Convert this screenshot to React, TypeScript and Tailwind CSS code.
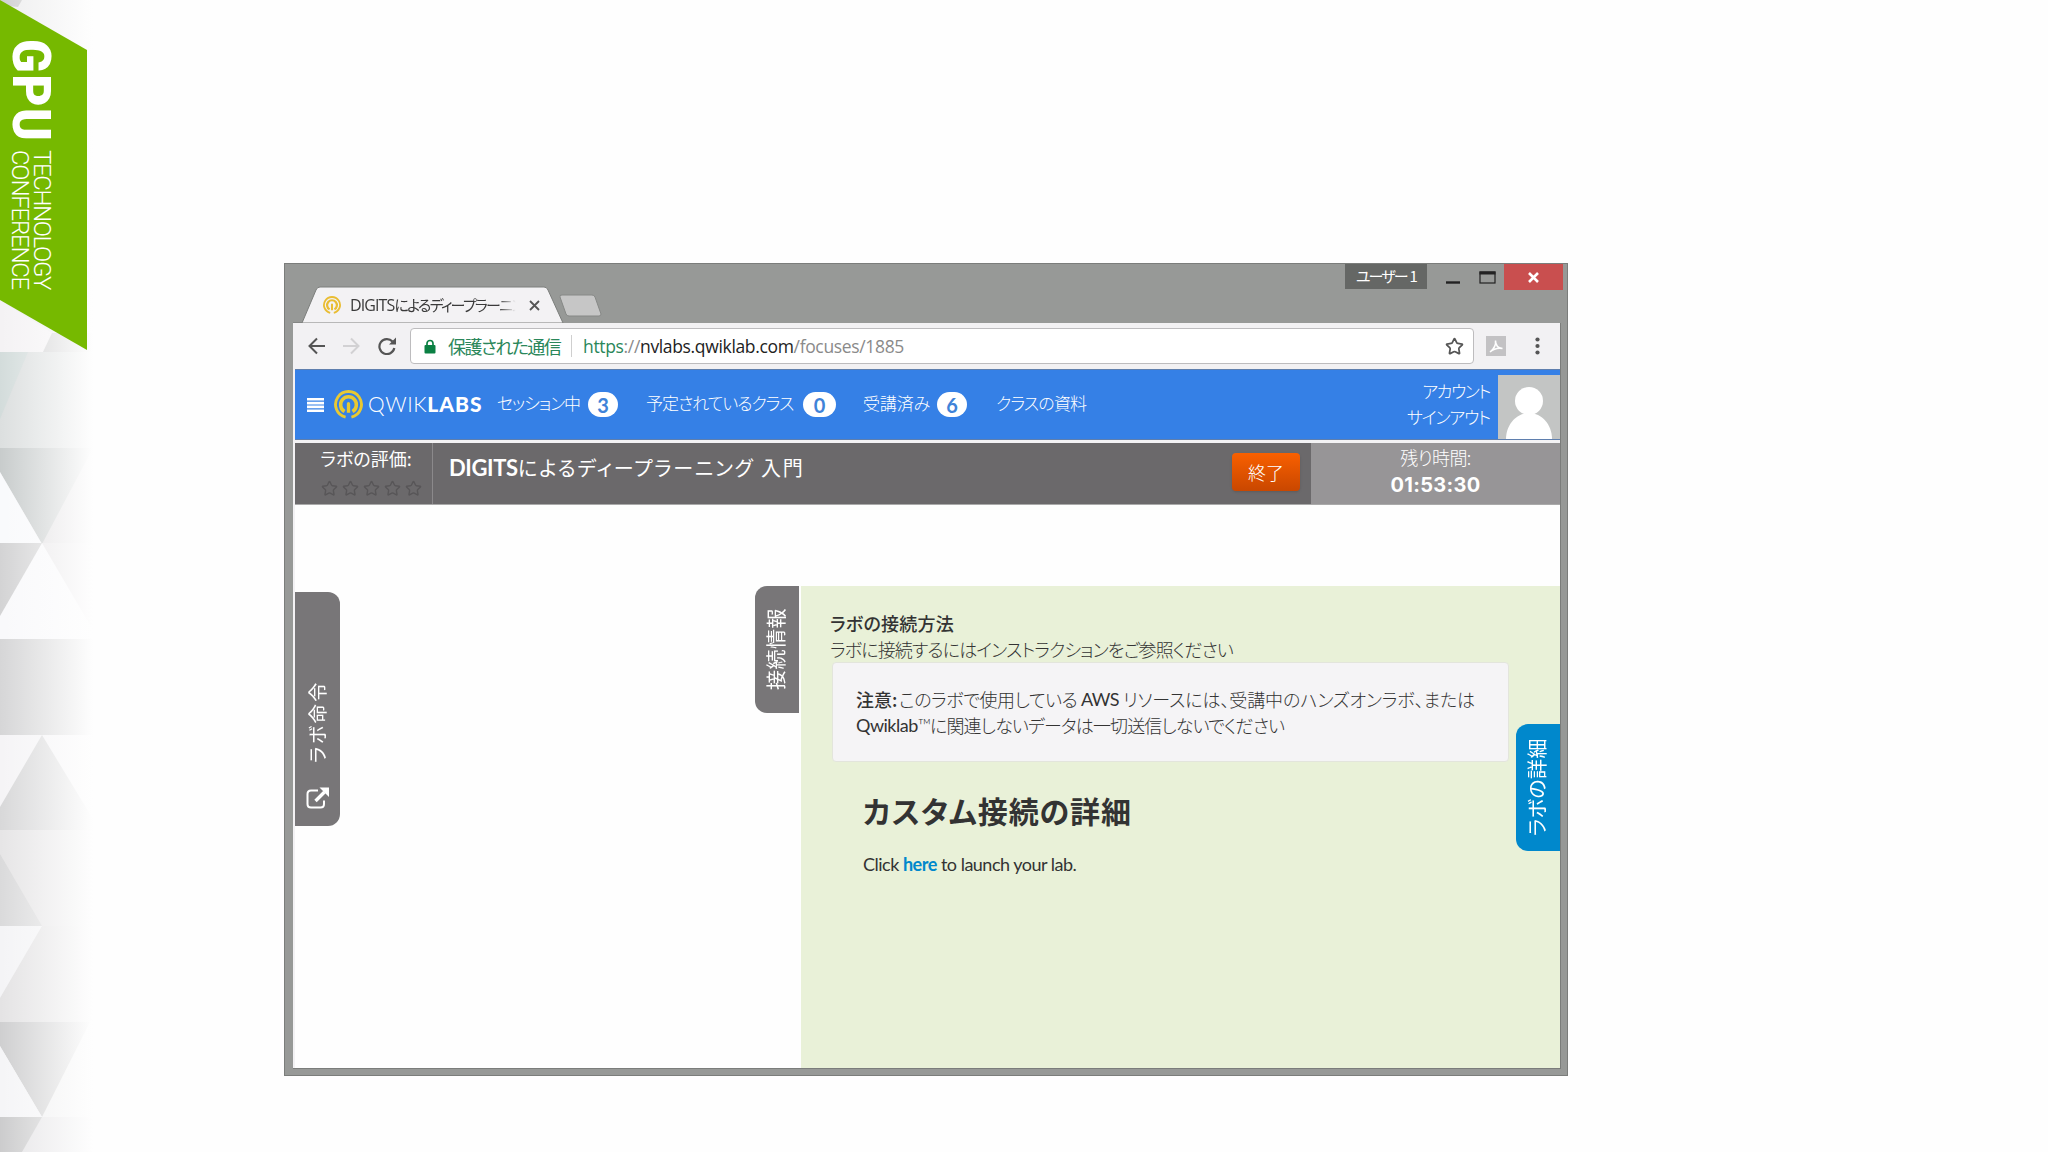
import type { ReactNode } from 'react'
import { Star } from 'lucide-react'

function QwikMark({ className, color }: { className: string; color: string }) {
  return (
    <svg className={className} viewBox="0 0 28 28" fill="none" stroke={color}>
      <path d="M11.2 26.2A12.5 12.5 0 1 1 16.8 26.2" strokeWidth="2.8" />
      <path d="M10.2 20.8A7.6 7.6 0 1 1 17.8 20.8" strokeWidth="3.4" />
      <path d="M12.4 22V13.2a1.6 1.6 0 0 1 3.2 0V22Z" fill={color} stroke="none" />
    </svg>
  )
}

function Badge({ className, children }: { className: string; children: ReactNode }) {
  return (
    <span
      className={`flex h-[25px] items-center justify-center rounded-full bg-white font-[Lato] text-[20px] leading-none font-bold text-[#3f83d8] ${className}`}
    >
      {children}
    </span>
  )
}

// Faded triangle pattern behind the conference ribbon
function Facets() {
  return (
    <svg className="absolute top-0 left-0 h-[1152px] w-[93px]" viewBox="0 0 93 1152">
      <defs>
        <linearGradient id="fade" x1="0" x2="1" y1="0" y2="0">
          <stop offset="0" stopColor="#fefefe" stopOpacity="0" />
          <stop offset="1" stopColor="#fefefe" />
        </linearGradient>
      </defs>
      <rect width="93" height="1152" fill="#eeeeef" />
      <path d="M0 0H22L18 7L8 6Z" fill="#d0d0d1" />
      <path d="M0 300L52 333L43 352H0Z" fill="#f4f2f4" />
      <path d="M52 333L43 352H93V333Z" fill="#d0d0d1" />
      <rect y="352" width="93" height="96" fill="#dcdfdf" />
      <path d="M0 352H28L0 419Z" fill="#d3dcdb" />
      <rect y="448" width="93" height="96" fill="#e2e0e2" />
      <path d="M0 448H93L42 544L0 472Z" fill="#c8cccc" />
      <path d="M0 472L42 544H0Z" fill="#f9fafc" />
      <rect y="543" width="93" height="96" fill="#f9f9fb" />
      <path d="M0 543H42L0 616Z" fill="#d3d3d4" />
      <path d="M42 543H93V630Z" fill="#e8e6e8" />
      <rect y="639" width="93" height="96" fill="#d6d6d7" />
      <rect y="735" width="93" height="95" fill="#f5f4f6" />
      <path d="M42 735L0 807V830H93V819Z" fill="#d8d8d9" />
      <rect y="830" width="93" height="96" fill="#e6e5e6" />
      <path d="M0 854L42 926H0Z" fill="#dadadb" />
      <rect y="926" width="93" height="96" fill="#e4e3e4" />
      <path d="M0 926H42L0 998Z" fill="#f4f4f6" />
      <rect y="1022" width="93" height="95" fill="#f0f0f1" />
      <path d="M0 1022H90L42 1117L0 1046Z" fill="#cfcfd0" />
      <path d="M0 1046L42 1117H0Z" fill="#f5f5f7" />
      <rect y="1117" width="93" height="35" fill="#e6e5e7" />
      <path d="M0 1117H42L22 1152H0Z" fill="#cccccd" />
      <rect width="93" height="1152" fill="url(#fade)" />
    </svg>
  )
}

function Ribbon() {
  return (
    <div className="relative flex h-[350px] w-[87px] flex-col items-start bg-[#76b900] pt-[39px] text-white [clip-path:polygon(0_0,100%_50px,100%_100%,0_300px)]">
      <div className="ml-[4px] h-[98px] w-[54px] origin-top scale-y-[0.92] font-[Roboto] text-[54px] leading-[54px] font-black tracking-[1.5px] whitespace-nowrap [writing-mode:vertical-rl]">
        GPU
      </div>
      <div className="mt-[13px] ml-[9px] w-[44px] font-[Roboto] text-[24px] leading-[22px] font-light whitespace-nowrap [writing-mode:vertical-rl]">
        <div className="tracking-[-1.38px]">TECHNOLOGY</div>
        <div className="tracking-[-1.22px]">CONFERENCE</div>
      </div>
    </div>
  )
}

function TitleBar() {
  return (
    <div className="relative flex h-[59px] justify-between">
      <svg className="h-[59px] w-[340px]" viewBox="0 1 340 59">
        <path d="M275 34Q274 32 277 32H307Q309 32 310 34L316 51Q316 53 314 53H284Q282 53 281 51Z" fill="#c6c6c6" stroke="#868886" />
        <path d="M8 60H17L31 27Q32 24 35 24H259Q262 24 263 27L278 60Z" fill="#f3f2f4" stroke="#7c7e7c" />
      </svg>
      <div className="absolute top-[30px] left-[38px] flex items-center">
        <QwikMark className="size-[18px]" color="#e9bd33" />
        <span className="ml-[9px] w-[169px] font-['Open_Sans','Noto_Sans_CJK_JP'] text-[15px] leading-[22px] tracking-[-1.75px] whitespace-nowrap text-[#3a3a3a] [mask-image:linear-gradient(to_right,black_88%,transparent_98%)]">
          <span className="text-[16px] tracking-[-0.9px]">DIGITS</span>によるディープラーニン
        </span>
        <svg className="ml-[10px] size-[11px]" viewBox="0 0 11 11" stroke="#555" strokeWidth="1.8">
          <path d="M1 1L10 10M10 1L1 10" />
        </svg>
      </div>
      <div className="flex items-start">
        <span className="flex h-[25px] w-[82px] items-center justify-center bg-[#656765] text-[15px] tracking-[-1.9px] text-white">
          ユーザー&nbsp; 1
        </span>
        <svg className="h-[26px] w-[77px]" viewBox="0 0 77 26" fill="none" stroke="#222">
          <path d="M19 18.5H33" strokeWidth="2.4" />
          <rect x="53" y="8" width="15" height="11" strokeWidth="1.2" />
          <path d="M52.5 9H68.5" strokeWidth="3" />
        </svg>
        <span className="mr-[4px] flex h-[26px] w-[59px] items-center justify-center bg-[#c94f4f]">
          <svg className="size-[11px]" viewBox="0 0 11 11" stroke="#fff" strokeWidth="2.6">
            <path d="M1 1L10 10M10 1L1 10" />
          </svg>
        </span>
      </div>
    </div>
  )
}

function Toolbar() {
  return (
    <div className="flex h-[46px] items-center bg-[#f2f1f3] pl-[15px]">
      <svg className="h-[18px] w-[90px]" viewBox="0 0 90 18" fill="none" strokeWidth="2">
        <path d="M17 9H2M9 1.5L1.5 9L9 16.5" stroke="#555" />
        <path d="M35 9H50M43 1.5L50.5 9L43 16.5" stroke="#d2d1d3" />
        <path d="M84.5 4.5A7.5 7.5 0 1 0 86.3 11" stroke="#555" strokeWidth="2.2" />
        <path d="M88 .5V7.5H81Z" fill="#555" />
      </svg>
      <div className="ml-[12px] flex h-[36px] w-[1064px] items-center rounded-[4px] border border-[#bdbcbe] bg-white pl-[13px] text-[17.5px] whitespace-nowrap">
        <svg className="h-[15px] w-[12px]" viewBox="0 0 12 15">
          <path d="M3 7V4.5a3 3 0 0 1 6 0V7" fill="none" stroke="#0b8043" strokeWidth="1.7" />
          <rect x=".5" y="6" width="11" height="8.5" rx="1" fill="#0b8043" />
        </svg>
        <span className="ml-[12px] w-[112px] text-[18px] tracking-[-1.6px] text-[#2a875a]">保護された通信</span>
        <span className="mr-[11px] ml-[11px] h-[22px] w-px bg-[#cfcfcf]" />
        <span className="font-['Open_Sans'] tracking-[-0.34px] text-[#8a8a8a]">
          <span className="text-[#2a875a]">https</span>://<span className="text-[#222]">nvlabs.qwiklab.com</span>/focuses/1885
        </span>
        <Star className="mr-[9px] ml-auto size-[19px] text-[#555]" strokeWidth={2.2} />
      </div>
      <svg className="ml-[12px] size-[20px]" viewBox="0 0 20 20">
        <rect width="20" height="20" fill="#c3c2c4" />
        <path d="M4 16C8 13 10 9 9.5 4.5C9.5 9 12 12 16.5 12.5C12 11.5 8 12.5 4 16Z" fill="none" stroke="#fff" strokeWidth="1.5" />
      </svg>
      <svg className="ml-[29px] h-[18px] w-[5px]" viewBox="0 0 5 18" fill="#555">
        <circle cx="2.5" cy="2.5" r="2.1" />
        <circle cx="2.5" cy="9" r="2.1" />
        <circle cx="2.5" cy="15.5" r="2.1" />
      </svg>
    </div>
  )
}

function NavBar() {
  return (
    <nav className="flex h-[71px] items-center border-y border-[#5f7fae] bg-[#3580e6] pl-[12px] text-[17px] leading-[26px] font-light whitespace-nowrap text-white">
      <svg className="h-[14px] w-[17px]" viewBox="0 0 17 14" fill="#fff">
        <path d="M0 0H17V2.6H0ZM0 3.8H17V6.4H0ZM0 7.6H17V10.2H0ZM0 11.4H17V14H0Z" />
      </svg>
      <QwikMark className="ml-[10px] size-[29px]" color="#e9c931" />
      <div className="ml-[5px] w-[114px] pb-[2px] font-[Lato] text-[21px]">
        <span className="font-light tracking-[0.65px]">QWIK</span>
        <span className="font-black tracking-[1px]">LABS</span>
      </div>
      <span className="ml-[15px] w-[82px] pb-[3px] tracking-[-1.2px]">セッション中</span>
      <Badge className="ml-[9px] w-[30px]">3</Badge>
      <span className="ml-[28px] w-[147px] pb-[3px] tracking-[-1px]">予定されているクラス</span>
      <Badge className="ml-[10px] w-[33px]">0</Badge>
      <span className="ml-[27px] w-[67px] pb-[3px] tracking-[-0.16px]">受講済み</span>
      <Badge className="ml-[7px] w-[30px]">6</Badge>
      <span className="ml-[29px] pb-[3px] tracking-[-0.85px]">クラスの資料</span>
      <div className="mr-[8px] ml-auto flex flex-col items-end pb-[2px]">
        <span className="tracking-[-1.5px]">アカウント</span>
        <span className="tracking-[-1.2px]">サインアウト</span>
      </div>
      <svg className="mt-[4px] h-[64px] w-[62px]" viewBox="0 0 62 64">
        <rect width="62" height="64" fill="#c3c5c4" />
        <g fill="#fff">
          <circle cx="31" cy="26" r="14" />
          <path d="M8 64C8 50 18 38 31 38S54 50 54 64Z" />
        </g>
      </svg>
    </nav>
  )
}

function LabBar() {
  return (
    <div className="mt-[3px] flex h-[62px] border-b border-[#aaa] bg-[#6b696b] whitespace-nowrap text-white">
      <div className="flex w-[138px] flex-col items-center border-r border-[#8b898b] pl-[5px]">
        <span className="text-[18px] leading-[30px]">ラボの評価:</span>
        <div className="flex gap-[4px] pt-[7px] pl-[11px] text-[#585658]">
          <Star size={17} />
          <Star size={17} />
          <Star size={17} />
          <Star size={17} />
          <Star size={17} />
        </div>
      </div>
      <div className="flex flex-1 items-start pt-[7px] pl-[16px] text-[20px] leading-[36px]">
        <span className="w-[69px] font-[Lato] text-[22px] font-bold tracking-[-0.4px]">DIGITS</span>
        <span className="tracking-[1.8px]">によるディープラーニング 入門</span>
      </div>
      <button className="mt-[10px] mr-[11px] h-[38px] w-[68px] rounded-[4px] bg-linear-to-b from-[#f96000] to-[#c94700] text-[18px] font-light shadow-sm">
        終了
      </button>
      <div className="flex w-[249px] flex-col items-center bg-[#979597]">
        <span className="text-[18px] leading-[28px] font-light tracking-[-0.6px]">残り時間:</span>
        <span className="pt-px font-[Inter] text-[20px] leading-[26px] font-bold tracking-[0.3px]">01:53:30</span>
      </div>
    </div>
  )
}

function SideTab({ className, children }: { className: string; children: ReactNode }) {
  return (
    <div
      className={`flex rotate-180 items-center justify-center pl-[2px] leading-none whitespace-nowrap text-white [text-orientation:sideways] [writing-mode:vertical-rl] ${className}`}
    >
      {children}
    </div>
  )
}

function LabContent() {
  return (
    <div className="flex flex-1 items-start bg-[#fefefe] text-[#333]">
      <div className="mt-[87px] flex h-[234px] w-[45px] flex-col items-center rounded-r-[12px] bg-[#787678] pt-[88px]">
        <SideTab className="h-[84px] text-[19px] tracking-[2.5px]">ラボ命令</SideTab>
        <svg className="mt-[23px] size-[23px]" viewBox="0 0 23 23" fill="none" stroke="#fff">
          <path d="M12 3.5H5Q1.5 3.5 1.5 7V17Q1.5 20.5 5 20.5H14.5Q18 20.5 18 17V13.5" strokeWidth="2" />
          <path d="M9.5 14L18.5 5" strokeWidth="3.4" />
          <path d="M13.5 .5H23V10Z" fill="#fff" stroke="none" />
        </svg>
      </div>
      <SideTab className="mt-[81px] ml-[415px] h-[127px] w-[44px] rounded-r-[12px] bg-[#787678] text-[20px] tracking-[0.5px]">接続情報</SideTab>
      <div className="mt-[81px] ml-[2px] flex flex-1 items-start self-stretch bg-[#e9f1d8] whitespace-nowrap">
        <div className="w-[708px] pt-[24px] pl-[29px] text-[18px] leading-[26px] font-light">
          <h3 className="font-medium tracking-[0.24px]">ラボの接続方法</h3>
          <p className="tracking-[-0.86px]">ラボに接続するにはインストラクションをご参照ください</p>
          <div className="ml-[2px] h-[100px] rounded-[4px] border border-[#e3e5dc] bg-[#f5f4f6] pt-[23px] pl-[23px]">
            <p className="flex">
              <b className="w-[43px] font-medium">注意:</b>
              <span className="w-[182px] tracking-[-0.4px]">このラボで使用している</span>
              <span className="w-[42px] font-[Lato] font-normal tracking-[-0.57px]">AWS</span>
              <span className="tracking-[-0.1px]">リソースには、受講中のハンズオンラボ、または</span>
            </p>
            <p className="flex">
              <span className="w-[74px] font-[Lato] font-normal tracking-[-0.5px]">
                Qwiklab<span className="font-light">™</span>
              </span>
              <span className="tracking-[-0.86px]">に関連しないデータは一切送信しないでください</span>
            </p>
          </div>
          <h2 className="mt-[27px] ml-[33px] text-[30px] leading-[42px] font-bold tracking-[0.95px]">カスタム接続の詳細</h2>
          <p className="mt-[20px] ml-[33px] font-[Lato] text-[18px] leading-[26px] font-normal tracking-[-0.5px]">
            Click <span className="font-bold text-[#0088cc]">here</span> to launch your lab.
          </p>
        </div>
        <SideTab className="mt-[138px] ml-auto h-[127px] w-[44px] rounded-r-[12px] bg-[#0088cc] text-[20px] tracking-[0.4px]">ラボの詳細</SideTab>
      </div>
    </div>
  )
}

export default function App() {
  return (
    <div className="flex h-[1152px] w-[2048px] items-start overflow-hidden bg-[#fefefe] font-['Noto_Sans_CJK_JP',sans-serif] [font-feature-settings:'palt']">
      <aside className="relative h-[1152px] w-[93px]">
        <Facets />
        <Ribbon />
      </aside>
      <main className="mt-[263px] ml-[191px] flex h-[813px] w-[1284px] flex-col border border-[#7b7d7b] bg-[#979997]">
        <TitleBar />
        <div className="mr-[6px] mb-[6px] ml-[8px] flex flex-1 flex-col border-r border-b border-[#7b7d7b] bg-[#f3f2f4]">
          <Toolbar />
          <div className="flex flex-1 flex-col pl-[2px]">
            <NavBar />
            <LabBar />
            <LabContent />
          </div>
        </div>
      </main>
    </div>
  )
}
